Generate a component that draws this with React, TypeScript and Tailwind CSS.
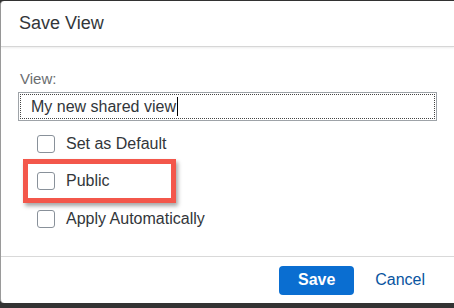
const CheckRow = ({ label }: { label: string }) => (
  <div className="flex items-center gap-[11px] pl-[19px] h-full">
    <span className="w-[18px] h-[18px] rounded-[3px] border border-[#89919a] bg-white shrink-0" />
    <span className="text-[16px] text-[#32363a] leading-none">{label}</span>
  </div>
);

export default function App() {
  return (
    <div
      className="w-[454px] h-[308px] bg-[#333333] pt-[1px] overflow-hidden"
      style={{ fontFamily: '"Liberation Sans", Arial, sans-serif' }}
    >
      <div className="h-[302px] bg-white rounded-l-[4px] flex flex-col border-l border-[#9a9a9a]">
        {/* header */}
        <div className="h-[46px] shrink-0 flex items-center pl-[18px] border-b border-[#d6d6d6] shadow-[0_1px_2px_rgba(0,0,0,0.08)]">
          <span className="text-[18px] text-[#32363a]">Save View</span>
        </div>

        {/* body */}
        <div className="flex-1 flex flex-col pt-[23px] pl-[17px] pr-[17px]">
          <div className="h-[18px] pl-[2px] text-[15px] leading-[18px] text-[#6a6d70]">View:</div>
          <div className="mt-[4px] h-[29px] border border-[#9ea3a8] p-[1px]">
            <div className="h-full border border-dotted border-[#444] flex items-center pl-[10px]">
              <span className="text-[16px] text-[#32363a] leading-none">My new shared view</span>
              <span className="w-[1px] h-[19px] bg-black ml-[1px]" />
            </div>
          </div>

          <div className="mt-[4px] flex flex-col">
            <div className="h-[37px]">
              <CheckRow label="Set as Default" />
            </div>
            <div className="h-[38px] relative">
              <CheckRow label="Public" />
              <span className="absolute left-[5px] top-[-3px] w-[153px] h-[44px] border-[5px] border-[#f3574b] shadow-[2px_3px_4px_rgba(0,0,0,0.35)] pointer-events-none" />
            </div>
            <div className="h-[37px]">
              <CheckRow label="Apply Automatically" />
            </div>
          </div>
        </div>

        {/* footer */}
        <div className="h-[47px] shrink-0 border-t border-[#d9d9d9] flex items-center justify-end gap-[10px] pr-[18px]">
          <button className="h-[29px] w-[75px] rounded-[4px] bg-[#0a6ed1] text-white text-[16px] font-bold">
            Save
          </button>
          <button className="h-[29px] px-[11px] text-[16px] text-[#0854a0]">Cancel</button>
        </div>
      </div>
    </div>
  );
}
